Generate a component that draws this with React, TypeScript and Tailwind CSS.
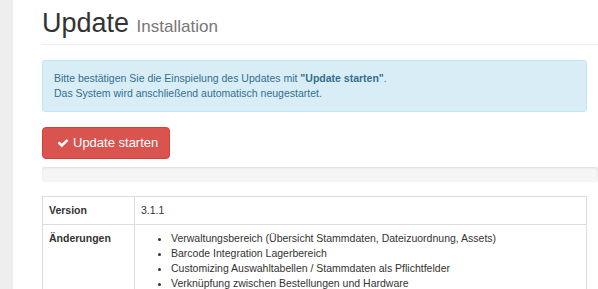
const changes = [
  "Verwaltungsbereich (Übersicht Stammdaten, Dateizuordnung, Assets)",
  "Barcode Integration Lagerbereich",
  "Customizing Auswahltabellen / Stammdaten als Pflichtfelder",
  "Verknüpfung zwischen Bestellungen und Hardware",
];

function CheckIcon() {
  return (
    <svg viewBox="0 0 1792 1792" className="w-[12px] h-[12px]" fill="currentColor">
      <path d="M1671 566q0 40-28 68l-724 724-136 136q-28 28-68 28t-68-28l-136-136-362-362q-28-28-28-68t28-68l136-136q28-28 68-28t68 28l294 295 656-657q28-28 68-28t68 28l136 136q28 28 28 68z" />
    </svg>
  );
}

export default function App() {
  return (
    <div className="flex h-[289px] w-[598px] overflow-hidden bg-white text-[#333] font-['Liberation_Sans',Arial,sans-serif]">
      {/* Sidebar edge */}
      <div className="w-[13px] shrink-0 bg-[#eeeeee]" />

      <div className="flex-1 pl-[29px]">
        {/* Page header */}
        <div className="mt-[8px] pb-[6px] mb-[15px] border-b border-[#eeeeee]">
          <h1 className="h-[30px] text-[27px] leading-[30px] text-[#333]">
            Update <span className="text-[17px] leading-none text-[#777]">Installation</span>
          </h1>
        </div>

        {/* Info alert */}
        <div className="w-[545px] bg-[#d9edf7] border border-[#bce8f1] rounded-[3px] px-[11px] py-[10px] text-[10.5px] leading-[15px] text-[#31708f]">
          <p>
            Bitte bestätigen Sie die Einspielung des Updates mit <b>"Update starten"</b>.
          </p>
          <p>Das System wird anschließend automatisch neugestartet.</p>
        </div>

        <button className="mt-[15px] h-[32px] w-[128px] flex items-center gap-[4px] pl-[14px] bg-[#d9534f] border border-[#d43f3a] rounded-[4px] text-white text-[13px]">
          <CheckIcon />
          Update starten
        </button>

        {/* Progress */}
        <div className="mt-[8px] h-[15px] bg-[#f5f5f5] rounded-[3px] shadow-[inset_0_1px_2px_rgba(0,0,0,0.1)]" />

        {/* Details table */}
        <table className="mt-[14px] w-[545px] border-collapse border border-[#dddddd] text-[10.5px] leading-[15px] text-[#333]">
          <tbody>
            <tr>
              <td className="w-[92px] border border-[#dddddd] p-[6px] font-bold align-top">Version</td>
              <td className="border border-[#dddddd] p-[6px] align-top">3.1.1</td>
            </tr>
            <tr>
              <td className="border border-[#dddddd] p-[6px] font-bold align-top">Änderungen</td>
              <td className="border border-[#dddddd] p-[6px] align-top">
                <ul className="list-disc pl-[30px]">
                  {changes.map((c) => (
                    <li key={c}>{c}</li>
                  ))}
                </ul>
              </td>
            </tr>
          </tbody>
        </table>
      </div>
    </div>
  );
}
